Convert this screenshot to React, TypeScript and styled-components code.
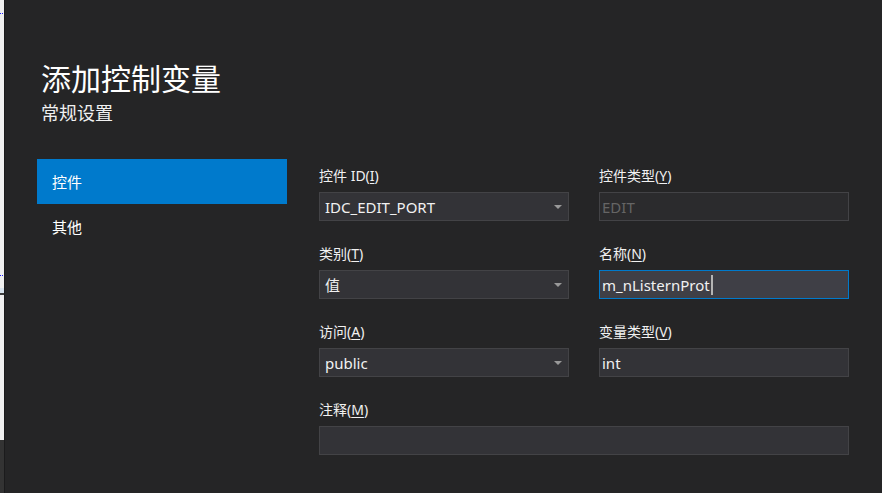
import React from "react";
import styled, { createGlobalStyle } from "styled-components";

const Global = createGlobalStyle`
  html, body { margin: 0; padding: 0; background: #252526; }
  body { width: 882px; height: 493px; overflow: hidden; }
  #root { width: 882px; height: 493px; }
  * { box-sizing: border-box; }
`;

const FONT = `"Noto Sans", "Noto Sans CJK SC", sans-serif`;

const Window = styled.div`
  display: flex;
  width: 882px;
  height: 493px;
  background: #252526;
  font-family: ${FONT};
  color: #f1f1f1;
`;

const Strip = styled.div`
  position: relative;
  width: 5px;
  flex: none;
  background: linear-gradient(to bottom, #f0f0f0 0, #f0f0f0 288px, #d9e4ee 288px, #d9e4ee 293px, #3c3c3c 293px, #3c3c3c 295px, #f0f0f0 295px, #f0f0f0 440px, #333333 440px);
  border-right: 1px solid #1b1b1c;
`;

const Dot = styled.span<{ $top: number }>`
  position: absolute;
  left: 0;
  top: ${(p) => p.$top}px;
  width: 3px;
  height: 1px;
  background: repeating-linear-gradient(to right, #1e1eff 0 1px, transparent 1px 2px);
`;

const Main = styled.div`
  flex: 1;
  display: flex;
  flex-direction: column;
  padding: 55px 0 0 32px;
`;

const Header = styled.div`
  display: flex;
  flex-direction: column;
  padding-left: 4px;
`;

const Title = styled.div`
  font-size: 30px;
  line-height: 44px;
  height: 44px;
  color: #ffffff;
  font-family: "Noto Sans CJK SC", sans-serif;
`;

const Subtitle = styled.div`
  font-size: 18px;
  line-height: 26px;
  height: 26px;
  color: #f1f1f1;
  font-family: "Noto Sans CJK SC", sans-serif;
`;

const Body = styled.div`
  display: flex;
  margin-top: 34px;
  gap: 32px;
`;

const Nav = styled.div`
  display: flex;
  flex-direction: column;
  width: 250px;
`;

const NavItem = styled.div<{ $active?: boolean }>`
  height: 45px;
  display: flex;
  align-items: center;
  padding-left: 15px;
  font-size: 15px;
  font-family: "Noto Sans CJK SC", sans-serif;
  background: ${(p) => (p.$active ? "#007acc" : "transparent")};
  color: #ffffff;
`;

const Form = styled.div`
  display: grid;
  grid-template-columns: 250px 250px;
  column-gap: 30px;
  row-gap: 22px;
  margin-top: 6px;
  align-content: start;
`;

const Field = styled.div<{ $span?: boolean }>`
  display: flex;
  flex-direction: column;
  gap: 5px;
  grid-column: ${(p) => (p.$span ? "1 / span 2" : "auto")};
`;

const Label = styled.label`
  font-size: 14px;
  line-height: 22px;
  height: 22px;
  color: #f1f1f1;
  u { text-decoration: underline; text-underline-offset: 2px; }
`;

const Box = styled.div<{ $variant?: "normal" | "disabled" | "focus"; $pad?: number }>`
  position: relative;
  height: 29px;
  display: flex;
  align-items: center;
  padding-left: ${(p) => p.$pad ?? 2}px;
  font-size: 15px;
  background: ${(p) =>
    p.$variant === "disabled" ? "#2b2b2d" : p.$variant === "focus" ? "#3f3f46" : "#333337"};
  border: 1px solid
    ${(p) => (p.$variant === "disabled" ? "#434346" : p.$variant === "focus" ? "#007acc" : "#434346")};
  color: ${(p) => (p.$variant === "disabled" ? "#656565" : "#f1f1f1")};
  white-space: nowrap;
`;

const Arrow = styled.span`
  position: absolute;
  right: 6px;
  top: 12px;
  width: 0;
  height: 0;
  border-left: 4px solid transparent;
  border-right: 4px solid transparent;
  border-top: 4px solid #999999;
`;

const Caret = styled.span`
  display: inline-block;
  width: 2px;
  height: 20px;
  margin-left: 1px;
  background: #b4b4b4;
`;

function Combo({ value }: { value: string }) {
  return (
    <Box $pad={5}>
      {value}
      <Arrow />
    </Box>
  );
}

export default function App() {
  return (
    <Window>
      <Global />
      <Strip>
        <Dot $top={13} />
        <Dot $top={275} />
      </Strip>
      <Main>
        <Header>
          <Title>添加控制变量</Title>
          <Subtitle>常规设置</Subtitle>
        </Header>
        <Body>
          <Nav>
            <NavItem $active>控件</NavItem>
            <NavItem>其他</NavItem>
          </Nav>
          <Form>
            <Field>
              <Label>控件 ID(<u>I</u>)</Label>
              <Combo value="IDC_EDIT_PORT" />
            </Field>
            <Field>
              <Label>控件类型(<u>Y</u>)</Label>
              <Box $variant="disabled">EDIT</Box>
            </Field>
            <Field>
              <Label>类别(<u>T</u>)</Label>
              <Combo value="值" />
            </Field>
            <Field>
              <Label>名称(<u>N</u>)</Label>
              <Box $variant="focus">
                m_nListernProt
                <Caret />
              </Box>
            </Field>
            <Field>
              <Label>访问(<u>A</u>)</Label>
              <Combo value="public" />
            </Field>
            <Field>
              <Label>变量类型(<u>V</u>)</Label>
              <Box>int</Box>
            </Field>
            <Field $span>
              <Label>注释(<u>M</u>)</Label>
              <Box />
            </Field>
          </Form>
        </Body>
      </Main>
    </Window>
  );
}
